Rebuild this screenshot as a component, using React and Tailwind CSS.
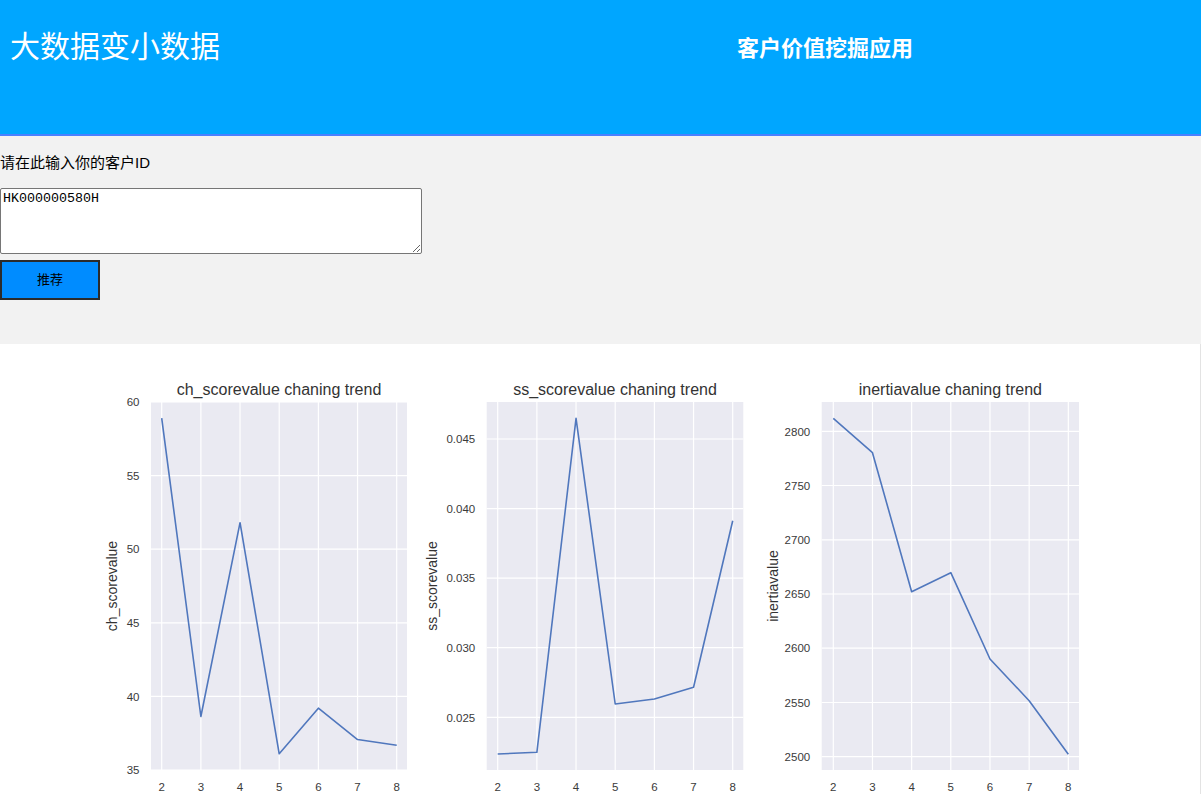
import React from "react";

const charts = [
  {
    title: "ch_scorevalue chaning trend",
    ylabel: "ch_scorevalue",
    left: 151,
    right: 407,
    x2: 161.7,
    ylabelX: 116.5,
    yticks: [
      ["35", 770],
      ["40", 696.4],
      ["45", 622.8],
      ["50", 549.2],
      ["55", 475.6],
      ["60", 402],
    ],
    data: [418.2, 716.5, 522.7, 753.8, 708.2, 739.5, 745.2],
  },
  {
    title: "ss_scorevalue chaning trend",
    ylabel: "ss_scorevalue",
    left: 486.7,
    right: 743.3,
    x2: 497.7,
    ylabelX: 436.8,
    yticks: [
      ["0.025", 717.3],
      ["0.030", 647.7],
      ["0.035", 578.2],
      ["0.040", 508.6],
      ["0.045", 439],
    ],
    data: [754, 752.3, 418.3, 704, 699, 687.3, 520.7],
  },
  {
    title: "inertiavalue chaning trend",
    ylabel: "inertiavalue",
    left: 821.7,
    right: 1079,
    x2: 833.3,
    ylabelX: 777.5,
    yticks: [
      ["2500", 756.7],
      ["2550", 702.5],
      ["2600", 648.2],
      ["2650", 594],
      ["2700", 539.8],
      ["2750", 485.5],
      ["2800", 431.3],
    ],
    data: [418.3, 452.7, 591.7, 572.7, 659, 700.7, 754.3],
  },
];

const TOP = 402;
const BOTTOM = 770;
const STEP = 39.17;

function Chart({ c }) {
  const xs = [0, 1, 2, 3, 4, 5, 6].map((i) => c.x2 + i * STEP);
  const pts = xs.map((x, i) => `${x},${c.data[i]}`).join(" ");
  const cx = (c.left + c.right) / 2;
  return (
    <g>
      <rect x={c.left} y={TOP} width={c.right - c.left} height={BOTTOM - TOP} fill="#eaeaf2" />
      {c.yticks.map(([t, y]) => (
        <line key={"h" + t} x1={c.left} x2={c.right} y1={y} y2={y} stroke="#ffffff" strokeWidth="1.2" />
      ))}
      {xs.map((x, i) => (
        <line key={"v" + i} x1={x} x2={x} y1={TOP} y2={BOTTOM} stroke="#ffffff" strokeWidth="1.2" />
      ))}
      <polyline points={pts} fill="none" stroke="#5077bd" strokeWidth="1.6" strokeLinejoin="round" />
      <text x={cx} y={394.5} textAnchor="middle" fontSize="16" fill="#333333">
        {c.title}
      </text>
      {c.yticks.map(([t, y]) => (
        <text key={"yt" + t} x={c.left - 11.5} y={y + 4.2} textAnchor="end" fontSize="11.5" fill="#3a3a3a">
          {t}
        </text>
      ))}
      {xs.map((x, i) => (
        <text key={"xt" + i} x={x} y={790.5} textAnchor="middle" fontSize="11.5" fill="#3a3a3a">
          {i + 2}
        </text>
      ))}
      <text
        x={c.ylabelX}
        y={586}
        textAnchor="middle"
        fontSize="14"
        fill="#333333"
        transform={`rotate(-90 ${c.ylabelX} 586)`}
      >
        {c.ylabel}
      </text>
    </g>
  );
}

export default function App() {
  return (
    <div
      className="w-[1201px] min-h-[794px] bg-white"
      style={{ fontFamily: '"Liberation Sans", "Noto Sans CJK SC", sans-serif' }}
    >
      <header className="h-[136px] bg-[#00a6ff] border-b-2 border-[#4a80ff] flex items-start text-white">
        <div className="w-[737px] pl-[10px] pt-[29px]">
          <h1
            className="text-[30px] leading-[30px] font-normal"
            style={{ fontFamily: '"Noto Sans CJK SC", sans-serif' }}
          >
            大数据变小数据
          </h1>
        </div>
        <div className="pt-[35px]">
          <h2
            className="text-[22px] leading-[22px] font-bold"
            style={{ fontFamily: '"Noto Sans CJK SC", sans-serif' }}
          >
            客户价值挖掘应用
          </h2>
        </div>
      </header>

      <section className="h-[208px] bg-[#f2f2f2] pt-[19px]">
        <div className="flex flex-col items-start">
          <p className="text-[15px] leading-[15px] text-black">请在此输入你的客户ID</p>
          <textarea
            className="mt-[18px] w-[422px] h-[66px] bg-white border border-[#767676] rounded-[2px] px-[2px] py-[2px] text-[13.33px] leading-[15px] text-black resize-y"
            style={{ fontFamily: '"Liberation Mono", monospace' }}
            defaultValue="HK000000580H"
          />
          <button className="mt-[6px] w-[100px] h-[40px] bg-[#008cff] border-2 border-[#2b2b2b] text-[13px] text-black">
            推荐
          </button>
        </div>
      </section>

      <section className="h-[450px] bg-white border-r border-[#e3e3e3] overflow-hidden">
        <svg width="1200" height="450" viewBox="0 344 1200 450" className="block">
          <g style={{ fontFamily: '"Liberation Sans", Arial, sans-serif' }}>
            {charts.map((c) => (
              <Chart key={c.title} c={c} />
            ))}
          </g>
        </svg>
      </section>
    </div>
  );
}
